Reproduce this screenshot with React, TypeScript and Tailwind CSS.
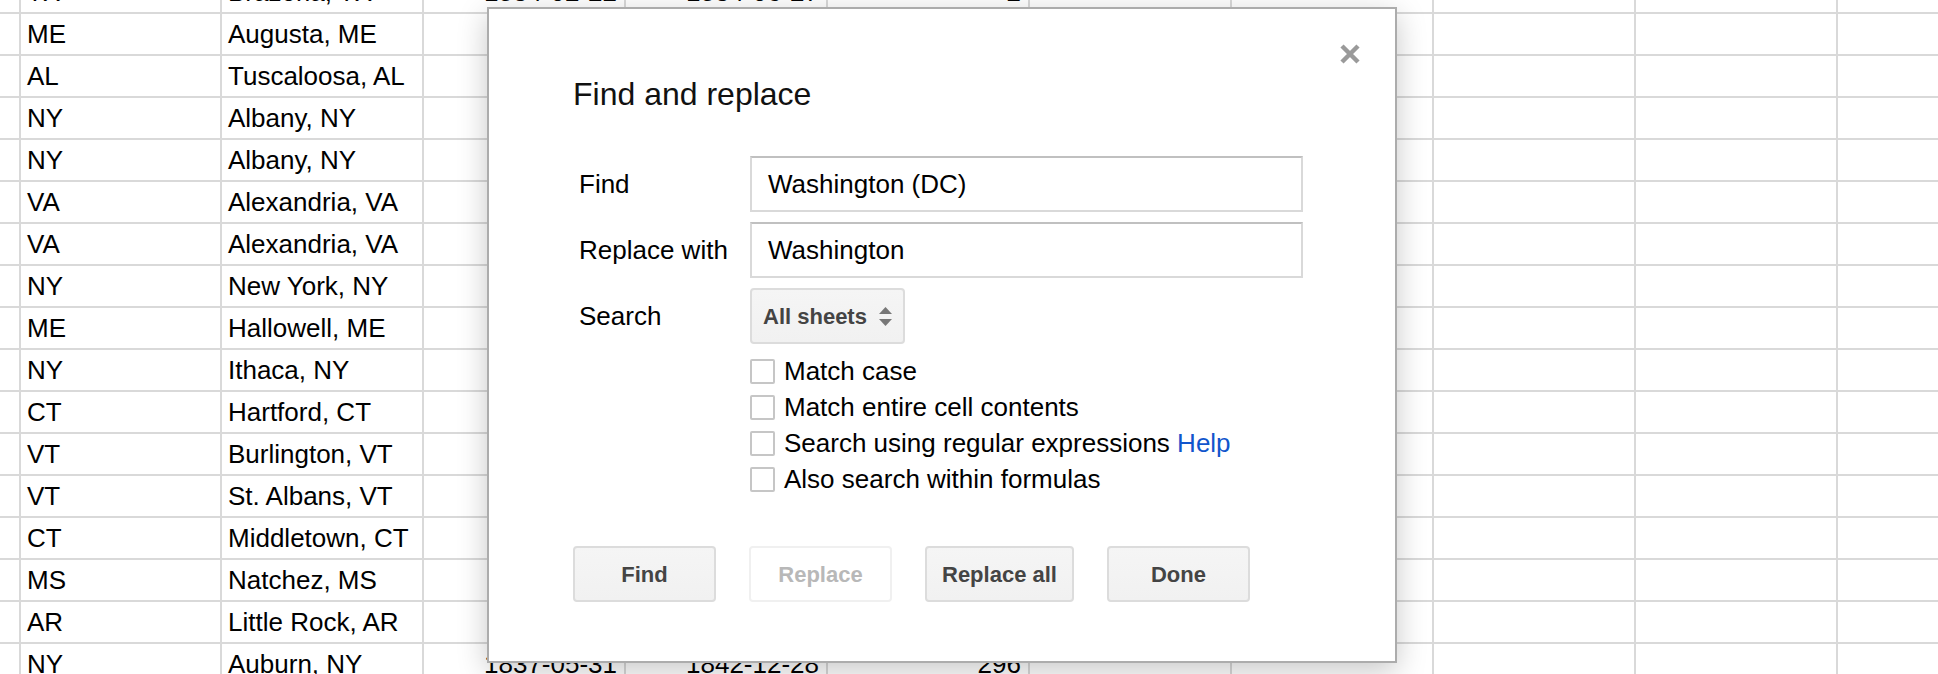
import React from "react";

const rows: [string, string, string, string, string][] = [
  ["TX", "Brazoria, TX", "1834-02-22", "1834-06-27", "2"],
  ["ME", "Augusta, ME", "", "", ""],
  ["AL", "Tuscaloosa, AL", "", "", ""],
  ["NY", "Albany, NY", "", "", ""],
  ["NY", "Albany, NY", "", "", ""],
  ["VA", "Alexandria, VA", "", "", ""],
  ["VA", "Alexandria, VA", "", "", ""],
  ["NY", "New York, NY", "", "", ""],
  ["ME", "Hallowell, ME", "", "", ""],
  ["NY", "Ithaca, NY", "", "", ""],
  ["CT", "Hartford, CT", "", "", ""],
  ["VT", "Burlington, VT", "", "", ""],
  ["VT", "St. Albans, VT", "", "", ""],
  ["CT", "Middletown, CT", "", "", ""],
  ["MS", "Natchez, MS", "", "", ""],
  ["AR", "Little Rock, AR", "", "", ""],
  ["NY", "Auburn, NY", "1837-05-31", "1842-12-28", "296"],
];

const font = "font-['Liberation_Sans',Arial,Helvetica,sans-serif]";

function Cell({
  w,
  children,
  right,
}: {
  w: string;
  children?: React.ReactNode;
  right?: boolean;
}) {
  return (
    <div
      className={`${w} shrink-0 h-full border-r-2 border-[#d9d9d9] flex items-center overflow-hidden whitespace-nowrap text-[26px] text-black ${
        right ? "justify-end pr-[7px]" : "pl-[6px]"
      }`}
    >
      {children}
    </div>
  );
}

function Checkbox({ children }: { children: React.ReactNode }) {
  return (
    <div className="flex items-center h-[36px]">
      <div className="w-[25px] h-[25px] border-2 border-[#c6c6c6] rounded-[2px] bg-white shrink-0" />
      <div className="ml-[9px] text-[26px] text-black whitespace-nowrap">{children}</div>
    </div>
  );
}

function Button({
  children,
  disabled,
}: {
  children: React.ReactNode;
  disabled?: boolean;
}) {
  return (
    <div
      className={`h-[56px] min-w-[143px] px-[15px] rounded-[4px] border-2 flex items-center justify-center text-[22px] font-bold whitespace-nowrap ${
        disabled
          ? "bg-white border-[#f0f0f0] text-[#b8b8b8]"
          : "bg-gradient-to-b from-[#f5f5f5] to-[#f1f1f1] border-[#dcdcdc] text-[#444]"
      }`}
    >
      {children}
    </div>
  );
}

export default function App() {
  return (
    <div className={`relative w-[1938px] h-[674px] overflow-hidden bg-white ${font}`}>
      <div className="mt-[-28px] flex flex-col">
        {rows.map((r, i) => (
          <div key={i} className="flex h-[42px] border-b-2 border-[#d9d9d9]">
            <Cell w="w-[21px]" />
            <Cell w="w-[201px]">{r[0]}</Cell>
            <Cell w="w-[202px]">{r[1]}</Cell>
            <Cell w="w-[202px]" right>
              {r[2]}
            </Cell>
            <Cell w="w-[202px]" right>
              {r[3]}
            </Cell>
            <Cell w="w-[202px]" right>
              {r[4]}
            </Cell>
            <Cell w="w-[202px]" />
            <Cell w="w-[202px]" />
            <Cell w="w-[202px]" />
            <Cell w="w-[202px]" />
            <Cell w="w-[202px]" />
          </div>
        ))}
      </div>

      <div className="absolute left-[487px] top-[7px] w-[910px] h-[656px] bg-white border-2 border-[#acacac] shadow-[0_8px_28px_rgba(0,0,0,0.22)] pl-[84px] pt-[67px]">
        <svg
          className="absolute right-[34px] top-[34px] w-[22px] h-[22px]"
          viewBox="0 0 22 22"
        >
          <path
            d="M3 3 L19 19 M19 3 L3 19"
            stroke="#9a9a9a"
            strokeWidth="4.5"
            strokeLinecap="butt"
          />
        </svg>

        <div className="text-[32px] leading-[36px] text-[#111]">Find and replace</div>

        <div className="mt-[44px] grid grid-cols-[177px_auto] gap-y-[10px] items-center">
          <div className="pl-[6px] text-[26px] text-black">Find</div>
          <div className="w-[553px] h-[56px] border-2 border-[#d9d9d9] border-t-[#c0c0c0] bg-white flex items-center pl-[16px] text-[26px] text-black">
            Washington (DC)
          </div>
          <div className="pl-[6px] text-[26px] text-black">Replace with</div>
          <div className="w-[553px] h-[56px] border-2 border-[#d9d9d9] border-t-[#c0c0c0] bg-white flex items-center pl-[16px] text-[26px] text-black">
            Washington
          </div>
          <div className="pl-[6px] text-[26px] text-black">Search</div>
          <div className="w-[155px] h-[56px] border-2 border-[#dcdcdc] rounded-[4px] bg-gradient-to-b from-[#f5f5f5] to-[#f1f1f1] flex items-center justify-between pl-[11px] pr-[10px]">
            <span className="text-[22px] font-bold text-[#444]">All sheets</span>
            <svg width="15" height="19" viewBox="0 0 15 19">
              <path d="M7.5 0 L14 7 L1 7 Z" fill="#777" />
              <path d="M1 12 L14 12 L7.5 19 Z" fill="#777" />
            </svg>
          </div>
        </div>

        <div className="ml-[177px] mt-[9px] flex flex-col">
          <Checkbox>Match case</Checkbox>
          <Checkbox>Match entire cell contents</Checkbox>
          <Checkbox>
            Search using regular expressions{" "}
            <span className="text-[#1155cc]">Help</span>
          </Checkbox>
          <Checkbox>Also search within formulas</Checkbox>
        </div>

        <div className="mt-[49px] flex gap-[33px]">
          <Button>Find</Button>
          <Button disabled>Replace</Button>
          <Button>Replace all</Button>
          <Button>Done</Button>
        </div>
      </div>
    </div>
  );
}
